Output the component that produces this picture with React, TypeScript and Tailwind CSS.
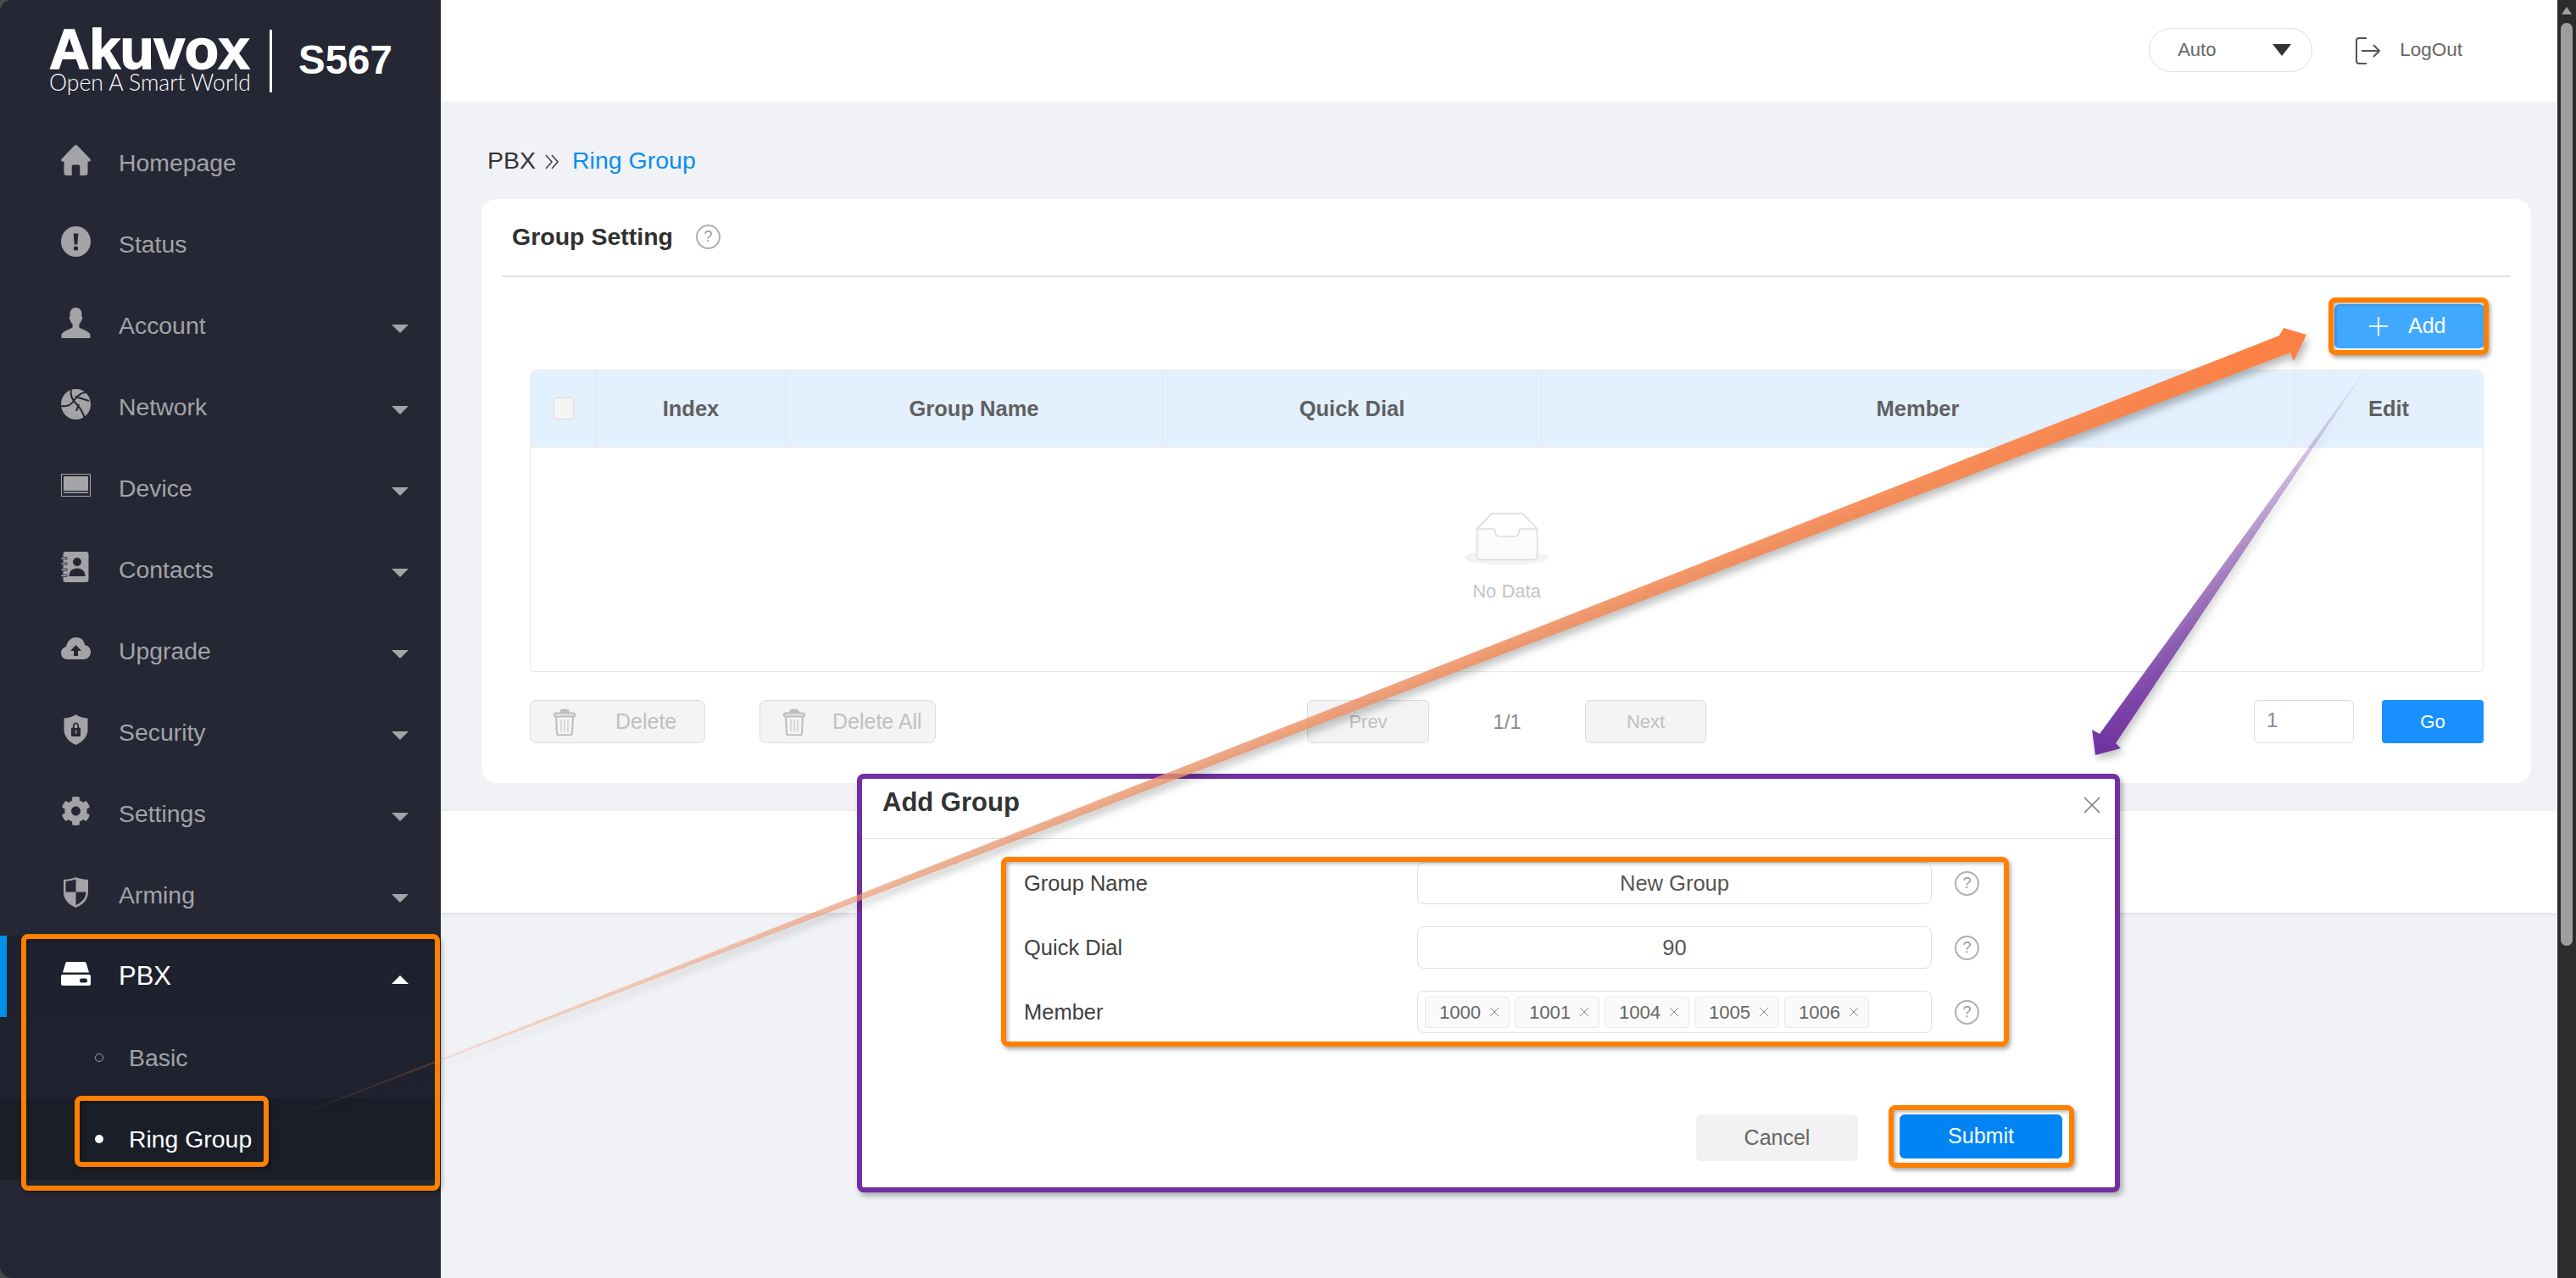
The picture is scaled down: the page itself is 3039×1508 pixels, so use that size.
import React from 'react';
import { FaCog } from 'react-icons/fa';

const HomeIcon = () => (
  <svg viewBox="0 0 35 36" className="w-full h-full" fill="currentColor">
    <path d="M17.5 0c.6 0 1.2.3 1.7.8L34.3 16.6c1.2 1.3.5 3-1.2 3h-1.6v13.6c0 1.6-1.2 2.8-2.8 2.8h-6.4V25.5c0-1.2-.8-2-2-2h-5.6c-1.2 0-2 .8-2 2V36H6.3c-1.6 0-2.8-1.2-2.8-2.8V19.6H1.9c-1.7 0-2.4-1.7-1.2-3L15.8.8c.5-.5 1.1-.8 1.7-.8z" />
  </svg>
);

const StatusIcon = () => (
  <svg viewBox="0 0 35 36" className="w-full h-full">
    <ellipse cx="17.5" cy="18" rx="17.5" ry="18" fill="currentColor" />
    <path d="M14.6 8.5h5.8l-1.2 13h-3.4z" fill="#252734" />
    <circle cx="17.5" cy="26" r="2.6" fill="#252734" />
  </svg>
);

const AccountIcon = () => (
  <svg viewBox="0 0 35 36" className="w-full h-full" fill="currentColor">
    <path d="M17.5 0c4.6 0 7 3.4 7 7.6 0 1.6-.2 3 .7 3.8.4 1-.2 2.4-1 3-.6 2.4-1.6 4-2.8 5.2v3.6c1.2 2 11.2 3.6 13.1 8.6V36H.5v-4.2c1.9-5 11.9-6.6 13.1-8.6v-3.6c-1.2-1.2-2.2-2.8-2.8-5.2-.8-.6-1.4-2-1-3 .9-.8.7-2.2.7-3.8C10.5 3.4 12.9 0 17.5 0z" />
  </svg>
);

const NetworkIcon = () => (
  <svg viewBox="0 0 35 36" className="w-full h-full">
    <ellipse cx="17.5" cy="18" rx="17.5" ry="18" fill="currentColor" />
    <path d="M12 0c-1 5 0 10 3 14 4 5 10 9 13 21M0 20c6 1 11 0 15-6 3-4 6-9 14-10M17 9l16 5M21 18l-3 8" stroke="#252734" strokeWidth="2" fill="none" />
  </svg>
);

const DeviceIcon = () => (
  <svg viewBox="0 0 35 27" className="w-full h-full">
    <rect x="0.5" y="0.5" width="34" height="26" fill="none" stroke="currentColor" />
    <rect x="3" y="3" width="29" height="17" fill="currentColor" />
    <rect x="3" y="21.5" width="29" height="1.5" fill="currentColor" />
  </svg>
);

const ContactsIcon = () => (
  <svg viewBox="0 0 35 36" className="w-full h-full">
    <path d="M5.5 0h24c1.9 0 3 1.2 3 3v30c0 1.8-1.1 3-3 3h-24c-1.9 0-3-1.2-3-3V3c0-1.8 1.1-3 3-3z" fill="currentColor" />
    <path d="M0 6.5h7V9H0zM0 13h7v2.5H0zM0 20h7v2.5H0zM0 27h7v2.5H0z" fill="currentColor" stroke="#252734" strokeWidth="0.8" />
    <circle cx="19" cy="12" r="5" fill="#252734" />
    <path d="M9.5 29c0-6 4-9.5 9.500-9.5s9.500 3.500 9.500 9.500z" fill="#252734" />
  </svg>
);

const UpgradeIcon = () => (
  <svg viewBox="0 0 35 26" className="w-full h-full">
    <path d="M18 0c5.4 0 9.400 3.800 10 9 4 .8 7 3.600 7 8 0 5-3.600 9-8.500 9H7.500C3 26 0 22.600 0 18.500c0-3.700 2.400-6.600 6-7.500C7.400 4.400 12 0 18 0z" fill="currentColor" />
    <path d="M17.500 9l6.500 7h-4v6h-5v-6h-4z" fill="#252734" />
  </svg>
);

const SecurityIcon = () => (
  <svg viewBox="0 0 35 36" className="w-full h-full">
    <path d="M17.500 0c3 2.400 8 4 14 4.500V18c0 8-6 14.500-14 18-8-3.500-14-10-14-18V4.500C9.500 4 14.500 2.400 17.500 0z" fill="currentColor" />
    <path d="M12.500 16h10v9.500h-10zM14.500 16v-3c0-4 6-4 6 0v3" fill="#252734" stroke="#252734" strokeWidth="1" />
    <path d="M15.800 16v-3c0-2.400 3.400-2.400 3.400 0v3z" fill="currentColor" />
    <rect x="16.800" y="18.500" width="1.500" height="4" fill="currentColor" />
  </svg>
);

const ArmingIcon = () => (
  <svg viewBox="0 0 35 36" className="w-full h-full">
    <path d="M17.500 0c3 1.400 9 2.800 14.500 3V18c0 8-6 14.500-14.500 18C9 32.500 3 26 3 18V3c5.500-.2 11.500-1.600 14.500-3z" fill="currentColor" />
    <path d="M17.500 2.500c-3 1-7.500 2-12 2.500v12.500h12zM17.500 17.500h12c0 7-5 12.500-12 15.500z" fill="#252734" />
  </svg>
);

const PbxIcon = () => (
  <svg viewBox="0 0 35 28" className="w-full h-full" fill="currentColor">
    <path d="M7.500 0h20c1.200 0 2 .6 2.300 1.700L33 12.500H2L5.200 1.700C5.500.6 6.300 0 7.500 0z" />
    <path d="M2 15h31c1.200 0 2 .8 2 2v9c0 1.200-.8 2-2 2H2c-1.200 0-2-.8-2-2v-9c0-1.200.8-2 2-2z" />
    <rect x="22" y="19.500" width="9" height="5" rx="2.500" fill="#1f222e" />
  </svg>
);

const SettingsIcon = () => <FaCog className="w-full h-full" />;

const navItems = [
  { label: 'Homepage', icon: <HomeIcon />, iconH: 'h-[36px]' },
  { label: 'Status', icon: <StatusIcon />, iconH: 'h-[36px]' },
  { label: 'Account', icon: <AccountIcon />, iconH: 'h-[36px]', arrow: true },
  { label: 'Network', icon: <NetworkIcon />, iconH: 'h-[36px]', arrow: true },
  { label: 'Device', icon: <DeviceIcon />, iconH: 'h-[27px]', arrow: true },
  { label: 'Contacts', icon: <ContactsIcon />, iconH: 'h-[36px]', arrow: true },
  { label: 'Upgrade', icon: <UpgradeIcon />, iconH: 'h-[26px]', arrow: true },
  { label: 'Security', icon: <SecurityIcon />, iconH: 'h-[36px]', arrow: true },
  { label: 'Settings', icon: <SettingsIcon />, iconH: 'h-[36px]', arrow: true },
  { label: 'Arming', icon: <ArmingIcon />, iconH: 'h-[36px]', arrow: true },
];

const Sidebar = () => (
  <aside className="w-[520px] h-full shrink-0 bg-[#252734] rounded-l-[14px] flex flex-col text-[28.4px] text-[#a3a3a8]">
    <div className="h-[144px] flex items-start pl-[58px] pt-[35px] text-white">
      <div className="w-[237px] flex flex-col">
        <span className="h-[46px] text-[66px] leading-[46px] font-bold tracking-[-0.4px] [-webkit-text-stroke:1.5px_white]">
          Akuvox
        </span>
        <span className="mt-[3px] h-[26px] text-[26.6px] leading-[26px] whitespace-nowrap font-['Lato',sans-serif] font-light">
          Open A Smart World
        </span>
      </div>
      <div className="ml-[23px] w-[3px] h-[74px] bg-white" />
      <span className="ml-[31px] mt-[11px] text-[47.5px] leading-[50px] font-bold">S567</span>
    </div>
    {navItems.map((item) => (
      <div key={item.label} className="h-[96px] flex items-center pl-[72px] pr-[38px]">
        <span className={`w-[35px] ${item.iconH} -mt-[7px]`}>{item.icon}</span>
        <span className="ml-[33px] flex-1">{item.label}</span>
        {item.arrow && (
          <span className="mt-[8px] w-0 h-0 border-x-[10px] border-x-transparent border-t-[10px] border-t-[#a3a3a8]" />
        )}
      </div>
    ))}
    <div className="h-[96px] flex items-center bg-[#1f222e] text-white border-l-[8px] border-l-[#0090e8] pl-[64px] pr-[38px] text-[31px]">
      <span className="w-[35px] h-[28px] -mt-[7px]">
        <PbxIcon />
      </span>
      <span className="ml-[33px] flex-1">PBX</span>
      <span className="mt-[8px] w-0 h-0 border-x-[10px] border-x-transparent border-b-[10px] border-b-white" />
    </div>
    <div className="h-[96px] flex items-center bg-[#20232f] pl-[112px]">
      <span className="w-[10px] h-[10px] rounded-full border border-[#a3a3a8]" />
      <span className="ml-[30px]">Basic</span>
    </div>
    <div className="h-[96px] flex items-center bg-[#1b1e28] text-white pl-[112px]">
      <span className="w-[10px] h-[10px] rounded-full bg-white" />
      <span className="ml-[30px]">Ring Group</span>
    </div>
  </aside>
);

const HelpIcon = () => (
  <span className="w-[29px] h-[29px] rounded-full border-2 border-[#b0b0b0] text-[#999999] text-[18px] leading-none flex items-center justify-center">
    ?
  </span>
);

const TrashIcon = () => (
  <svg viewBox="0 0 26 32" className="w-[26px] h-[32px] shrink-0" fill="none" stroke="#bdbdbd" strokeWidth="1.5">
    <path d="M8 3.500c0-3 10-3 10 0v2H8z" fill="#bdbdbd" />
    <rect x="1" y="5.500" width="24" height="4" rx="1.500" fill="#e4e4e4" strokeWidth="2" />
    <path d="M3 9.500l1 20c0 1 .8 1.700 1.800 1.700h14.400c1 0 1.800-.7 1.800-1.700l1-20" strokeWidth="2" />
    <path d="M9 13v14.500M13 13v14.500M17 13v14.500" strokeWidth="1" />
  </svg>
);

const Table = () => (
  <div className="mt-[25px] ml-[57px] mr-[56px] border border-[#e6e9ed] rounded-t-[8px] rounded-b-[4px] h-[357px] flex flex-col">
    <div className="h-[91px] bg-[#e3f0fd] border-b border-[#e3e6ea] rounded-t-[8px] flex text-[25.5px] font-bold text-[#606060]">
      <div className="w-[78px] flex items-center justify-center border-r border-[#dfe8f2]">
        <span className="w-[24px] h-[26px] bg-[#f5f5f5] border border-[#dcdcdc] rounded-[3px]" />
      </div>
      <div className="w-[223px] flex items-center justify-center border-r border-[#dfe8f2]">Index</div>
      <div className="w-[445px] flex items-center justify-center border-r border-[#dfe8f2]">Group Name</div>
      <div className="w-[447px] flex items-center justify-center border-r border-[#dfe8f2]">Quick Dial</div>
      <div className="w-[888px] flex items-center justify-center border-r border-[#dfe8f2]">Member</div>
      <div className="flex-1 flex items-center justify-center">Edit</div>
    </div>
    <div className="flex-1 flex flex-col items-center pt-[77px]">
      <svg viewBox="0 0 100 62" className="w-[100px] h-[62px]">
        <ellipse cx="50" cy="53" rx="50" ry="9" fill="#f3f3f3" />
        <path d="M14.500 19L32 1h36l17.500 18v32c0 3-1.500 4.500-4.500 4.500H19c-3 0-4.500-1.500-4.500-4.500z" fill="#fbfbfb" stroke="#dcdcdc" strokeWidth="1.5" />
        <path d="M14.500 19H33c2 0 3 1 3 3 0 4 1 6 5 6h18c4 0 5-2 5-6 0-2 1-3 3-3h18.500L68 1H32z" fill="#ffffff" stroke="#dcdcdc" strokeWidth="1.5" />
      </svg>
      <span className="mt-[18px] text-[22px] leading-[26px] text-[#c4c4c4]">No Data</span>
    </div>
  </div>
);

const DisabledBtn = ({ label, className }: { label: string; className: string }) => (
  <button className={`h-[51px] border border-[#dcdcdc] rounded-[6px] bg-[#f4f4f4] text-[#c0c0c0] text-[22px] flex items-center justify-center ${className}`}>
    {label}
  </button>
);

const DeleteBtn = ({ label, className, gap }: { label: string; className: string; gap: string }) => (
  <button className={`h-[51px] border border-[#dcdcdc] rounded-[8px] bg-[#f4f4f4] text-[#c0c0c0] text-[25px] flex items-center pl-[27px] ${className}`}>
    <TrashIcon />
    <span className={`${gap} whitespace-nowrap`}>{label}</span>
  </button>
);

const Card = () => (
  <section className="ml-[48px] mr-[31px] h-[689px] bg-white rounded-[18px] flex flex-col">
    <div className="mx-[24px] h-[92px] border-b-2 border-[#e1e4e8] flex items-center pl-[12px] pb-[2px]">
      <span className="text-[28.5px] font-bold text-[#303030]">Group Setting</span>
      <span className="ml-[27px]">
        <HelpIcon />
      </span>
    </div>
    <div className="mt-[32px] mr-[55px] flex justify-end">
      <button className="w-[177px] h-[52px] bg-[#40a9ff] rounded-[6px] text-white text-[25px] flex items-center pl-[41px]">
        <svg viewBox="0 0 22 22" className="w-[22px] h-[22px]" stroke="white" strokeWidth="2">
          <path d="M11 0v22M0 11h22" />
        </svg>
        <span className="ml-[24px]">Add</span>
      </button>
    </div>
    <Table />
    <div className="mt-[33px] ml-[57px] flex items-center">
      <DeleteBtn label="Delete" gap="ml-[47px]" className="w-[207px]" />
      <DeleteBtn label="Delete All" gap="ml-[32px]" className="ml-[64px] w-[208px]" />
      <DisabledBtn label="Prev" className="ml-[438px] w-[144px]" />
      <span className="w-[184px] text-center text-[24px] text-[#888888]">1/1</span>
      <DisabledBtn label="Next" className="w-[143px]" />
      <span className="ml-[646px] w-[118px] h-[51px] border border-[#dcdcdc] rounded-[6px] pl-[14px] text-[24px] leading-[46px] text-[#8a8a8a]">
        1
      </span>
      <button className="ml-[33px] w-[120px] h-[51px] bg-[#1890ff] rounded-[4px] text-white text-[22px]">Go</button>
    </div>
  </section>
);

const tags = ['1000', '1001', '1004', '1005', '1006'];

const FormRow = ({ label, children }: { label: string; children: React.ReactNode }) => (
  <div className="flex items-center h-[50px] pl-[191px] text-[25.5px] text-[#404040]">
    <span className="w-[464px]">{label}</span>
    <div className="w-[607px] h-[50px] border border-[#dcdfe3] rounded-[8px] flex items-center justify-center text-[#555555]">
      {children}
    </div>
    <span className="ml-[27px]">
      <HelpIcon />
    </span>
  </div>
);

const Modal = () => (
  <div className="absolute left-[1011px] top-[913px] w-[1490px] h-[494px] bg-white border-[6px] border-[#7030a0] rounded-[8px] shadow-[3px_4px_6px_rgba(0,0,0,0.3)] flex flex-col">
    <div className="h-[71px] border-b border-[#dcdfe3] flex items-center justify-between pl-[24px] pr-[17px] pb-[14px] shrink-0">
      <span className="text-[31px] font-bold text-[#333333]">Add Group</span>
      <svg viewBox="0 0 20 20" className="w-[20px] h-[20px] mt-[6px]" stroke="#777777" strokeWidth="1.5">
        <path d="M1 1l18 18M19 1L1 19" />
      </svg>
    </div>
    <div className="mt-[27px] flex flex-col gap-[26px]">
      <FormRow label="Group Name">New Group</FormRow>
      <FormRow label="Quick Dial">90</FormRow>
      <FormRow label="Member">
        <div className="w-full flex items-center gap-[6px] pl-[8px]">
          {tags.map((tag) => (
            <span key={tag} className="w-[100px] h-[37px] bg-[#fafafa] border border-[#e8e8e8] rounded-[4px] flex items-center pl-[16px] text-[22px] text-[#666666]">
              {tag}
              <svg viewBox="0 0 12 12" className="ml-[10px] w-[12px] h-[12px]" stroke="#888888" strokeWidth="1">
                <path d="M1 1l10 10M11 1L1 11" />
              </svg>
            </span>
          ))}
        </div>
      </FormRow>
    </div>
    <div className="mt-[96px] pr-[62px] flex justify-end items-start gap-[49px]">
      <button className="w-[191px] h-[55px] bg-[#f2f2f2] rounded-[6px] text-[25px] text-[#666666]">Cancel</button>
      <button className="w-[192px] h-[52px] bg-[#0084f4] rounded-[6px] text-[25px] text-white">Submit</button>
    </div>
  </div>
);

const annotation =
  'absolute border-[6px] border-[#ff8000] rounded-[8px] shadow-[2px_3px_5px_rgba(0,0,0,0.35),inset_2px_2px_4px_rgba(0,0,0,0.3)]';

const Arrows = () => (
  <svg viewBox="0 0 3039 1508" className="absolute inset-0 w-[3039px] h-[1508px] pointer-events-none">
    <defs>
      <linearGradient id="orangeFade" gradientUnits="userSpaceOnUse" x1="290" y1="1340" x2="2721" y2="395">
        <stop offset="0" stopColor="#fc8045" stopOpacity="0.03" />
        <stop offset="0.35" stopColor="#e8976f" stopOpacity="0.75" />
        <stop offset="1" stopColor="#fd8043" stopOpacity="1" />
      </linearGradient>
      <linearGradient id="purpleFade" gradientUnits="userSpaceOnUse" x1="2788" y1="437" x2="2472" y2="891">
        <stop offset="0" stopColor="#7030a0" stopOpacity="0.1" />
        <stop offset="1" stopColor="#7030a0" stopOpacity="1" />
      </linearGradient>
    </defs>
    <polygon
      points="290,1340 2689,396 2694,387 2721,395 2706,426 2702,416"
      fill="url(#orangeFade)"
      className="drop-shadow-[3px_6px_5px_rgba(0,0,0,0.28)]"
    />
    <polygon
      points="2790,437 2477,866 2468,861 2472,891 2502,883 2496,877"
      fill="url(#purpleFade)"
      className="drop-shadow-[3px_5px_5px_rgba(0,0,0,0.25)]"
    />
  </svg>
);

const App = () => {
  return (
    <div className="relative w-[3039px] h-[1508px] overflow-hidden flex bg-[#4a4a4a] font-['Liberation_Sans',Arial,sans-serif]">
      <Sidebar />
      <main className="flex-1 bg-[#f0f2f6] flex flex-col">
        <header className="h-[120px] bg-white flex items-center justify-end pr-[112px] text-[22px] text-[#666666]">
          <div className="w-[193px] h-[52px] rounded-full border border-[#dcdfe3] flex items-center justify-between pl-[33px] pr-[24px] -mt-[2px]">
            <span className="-mt-[2px]">Auto</span>
            <span className="w-0 h-0 border-x-[11px] border-x-transparent border-t-[14px] border-t-[#333333]" />
          </div>
          <svg viewBox="0 0 30 32" className="ml-[50px] w-[30px] h-[32px]" fill="none" stroke="#555555" strokeWidth="2">
            <path d="M14 1H5C3 1 2 2 2 4v24c0 2 1 3 3 3h9" />
            <path d="M8 16h21M22 9l7 7-7 7" />
          </svg>
          <span className="ml-[23px] text-[22.5px] -mt-[2px]">LogOut</span>
        </header>
        <div className="h-[115px] flex items-center pl-[55px] pt-[24px] text-[28.5px] text-[#333333]">
          PBX
          <svg viewBox="0 0 18 18" className="ml-[10px] w-[18px] h-[18px] mt-[2px]" fill="none" stroke="#444444" strokeWidth="1.6">
            <path d="M2 1l7 8-7 8M9 1l7 8-7 8" />
          </svg>
          <span className="ml-[15px] text-[#0a8fee]">Ring Group</span>
        </div>
        <Card />
        <div className="mt-[33px] h-[120px] bg-white shadow-[0_2px_6px_rgba(0,0,0,0.08)]" />
      </main>
      <div className="w-[22px] shrink-0 bg-[#2c2c2c] flex flex-col items-center pt-[8px]">
        <span className="w-0 h-0 border-x-[6px] border-x-transparent border-b-[9px] border-b-[#a0a0a0]" />
        <span className="mt-[10px] w-[14px] h-[1089px] rounded-full bg-[#9e9e9e]" />
      </div>
      <Modal />
      <div className={`${annotation} left-[25px] top-[1102px] w-[494px] h-[303px]`} />
      <div className={`${annotation} left-[88px] top-[1293px] w-[229px] h-[84px]`} />
      <div className={`${annotation} left-[2747px] top-[351px] w-[189px] h-[68px]`} />
      <div className={`${annotation} left-[1181px] top-[1011px] w-[1189px] h-[224px]`} />
      <div className={`${annotation} left-[2228px] top-[1304px] w-[219px] h-[74px]`} />
      <Arrows />
    </div>
  );
};

export default App;
